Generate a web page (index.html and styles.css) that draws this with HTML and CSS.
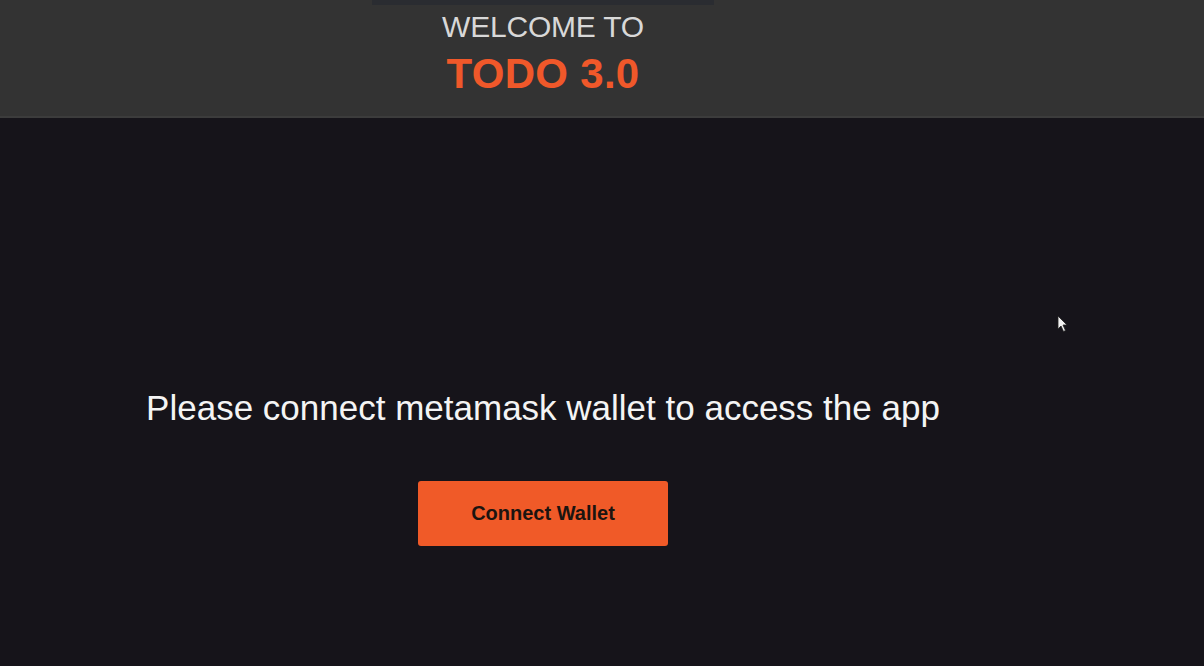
FILE: index.html
```html
<!DOCTYPE html>
<html lang="en">
<head>
<meta charset="utf-8">
<title>TODO 3.0</title>
<link rel="stylesheet" href="styles.css">
</head>
<body>
  <header class="header">
    <div class="header-inner">
      <div class="top-strip"></div>
      <div class="welcome">WELCOME TO</div>
      <div class="brand">TODO 3.0</div>
    </div>
  </header>
  <main class="main">
    <div class="content">
      <p class="message">Please connect metamask wallet to access the app</p>
      <button class="connect-btn">Connect Wallet</button>
    </div>
  </main>
  <svg class="cursor" width="12" height="18" viewBox="0 0 12 18"><path d="M1 1 L1 14 L4 11 L6.5 16.5 L8.5 15.5 L6 10 L10 10 Z" fill="#f2f2f2" stroke="#222" stroke-width="0.8"/></svg>
</body>
</html>
```

FILE: styles.css
```css
* { box-sizing: border-box; }
html, body {
  margin: 0;
  padding: 0;
  height: 100%;
}
body {
  background: #16141a;
  font-family: "Liberation Sans", Arial, sans-serif;
  overflow: hidden;
}
.header {
  height: 118px;
  background: #333333;
  border-bottom: 2px solid #3c3c3c;
}
.header-inner {
  width: 1086px;
  display: flex;
  flex-direction: column;
  align-items: center;
}
.top-strip {
  width: 342px;
  height: 5px;
  background: #2a2c31;
}
.welcome {
  margin-top: 5px;
  font-size: 30px;
  line-height: 34px;
  color: #d8d8d8;
  letter-spacing: -0.2px;
}
.brand {
  margin-top: 7px;
  font-size: 42px;
  line-height: 46px;
  font-weight: bold;
  color: #f0582a;
  letter-spacing: 0.3px;
}
.main {
  width: 1086px;
}
.content {
  display: flex;
  flex-direction: column;
  align-items: center;
  padding-top: 270px;
}
.message {
  margin: 0;
  font-size: 35px;
  line-height: 40px;
  color: #f4f4f4;
}
.connect-btn {
  margin-top: 53px;
  width: 250px;
  height: 65px;
  border: none;
  border-radius: 3px;
  background: #f05a28;
  color: #1c1410;
  font-family: "Liberation Sans", Arial, sans-serif;
  font-weight: bold;
  font-size: 20px;
}
.cursor {
  position: absolute;
  left: 1057px;
  top: 315px;
}
```
